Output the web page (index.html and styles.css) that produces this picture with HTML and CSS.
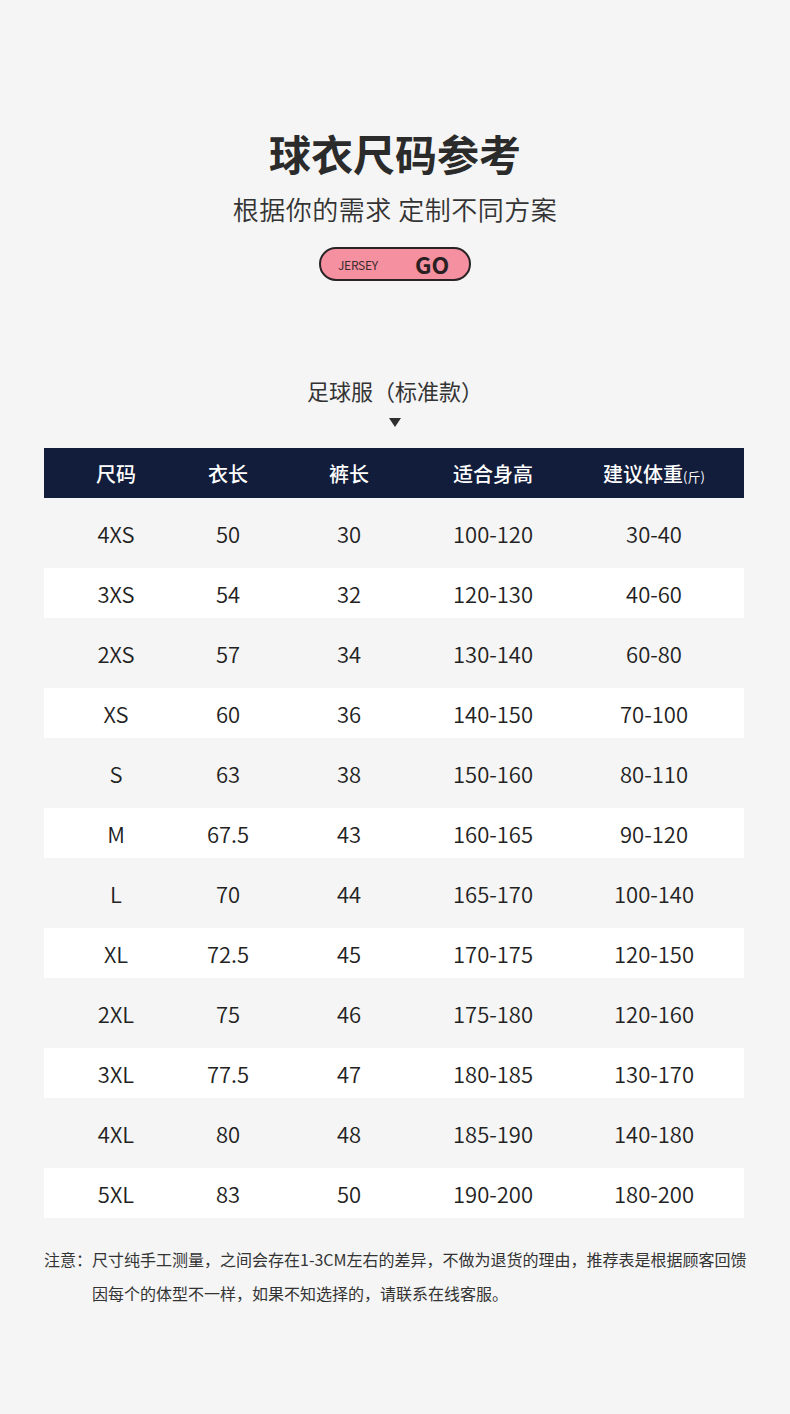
FILE: index.html
```html
<!DOCTYPE html>
<html lang="zh">
<head>
<meta charset="utf-8">
<title>球衣尺码参考</title>
<link rel="stylesheet" href="styles.css">
</head>
<body>
<div class="page">
  <header class="hero">
    <h1 class="title">球衣尺码参考</h1>
    <p class="subtitle">根据你的需求 定制不同方案</p>
    <div class="badge"><span class="badge-small">JERSEY</span><span class="badge-big">GO</span></div>
  </header>

  <section class="chart">
    <h2 class="chart-title">足球服（标准款）</h2>
    <div class="arrow"></div>
    <div class="table">
      <div class="row head">
        <div class="c c1">尺码</div><div class="c">衣长</div><div class="c">裤长</div><div class="c">适合身高</div><div class="c">建议体重<small>(斤)</small></div>
      </div>
      <div class="row"><div class="c c1">4XS</div><div class="c">50</div><div class="c">30</div><div class="c">100-120</div><div class="c">30-40</div></div>
      <div class="row alt"><div class="c c1">3XS</div><div class="c">54</div><div class="c">32</div><div class="c">120-130</div><div class="c">40-60</div></div>
      <div class="row"><div class="c c1">2XS</div><div class="c">57</div><div class="c">34</div><div class="c">130-140</div><div class="c">60-80</div></div>
      <div class="row alt"><div class="c c1">XS</div><div class="c">60</div><div class="c">36</div><div class="c">140-150</div><div class="c">70-100</div></div>
      <div class="row"><div class="c c1">S</div><div class="c">63</div><div class="c">38</div><div class="c">150-160</div><div class="c">80-110</div></div>
      <div class="row alt"><div class="c c1">M</div><div class="c">67.5</div><div class="c">43</div><div class="c">160-165</div><div class="c">90-120</div></div>
      <div class="row"><div class="c c1">L</div><div class="c">70</div><div class="c">44</div><div class="c">165-170</div><div class="c">100-140</div></div>
      <div class="row alt"><div class="c c1">XL</div><div class="c">72.5</div><div class="c">45</div><div class="c">170-175</div><div class="c">120-150</div></div>
      <div class="row"><div class="c c1">2XL</div><div class="c">75</div><div class="c">46</div><div class="c">175-180</div><div class="c">120-160</div></div>
      <div class="row alt"><div class="c c1">3XL</div><div class="c">77.5</div><div class="c">47</div><div class="c">180-185</div><div class="c">130-170</div></div>
      <div class="row"><div class="c c1">4XL</div><div class="c">80</div><div class="c">48</div><div class="c">185-190</div><div class="c">140-180</div></div>
      <div class="row alt"><div class="c c1">5XL</div><div class="c">83</div><div class="c">50</div><div class="c">190-200</div><div class="c">180-200</div></div>
    </div>
    <p class="note">注意：尺寸纯手工测量，之间会存在1-3CM左右的差异，不做为退货的理由，推荐表是根据顾客回馈<br>因每个的体型不一样，如果不知选择的，请联系在线客服。</p>
  </section>
</div>
</body>
</html>
```

FILE: styles.css
```css
html, body {
  margin: 0;
  padding: 0;
  background: #f5f5f5;
}
body {
  font-family: "Noto Sans CJK SC", "Noto Sans", sans-serif;
  color: #333;
}
.page {
  width: 790px;
  height: 1414px;
  box-sizing: border-box;
  padding-top: 124px;
}
.hero {
  display: flex;
  flex-direction: column;
  align-items: center;
}
.title {
  margin: 0;
  font-size: 42px;
  line-height: 58px;
  font-weight: 700;
  color: #2b2b2b;
}
.subtitle {
  margin: 9px 0 0;
  font-size: 26px;
  line-height: 36px;
  font-weight: 350;
  color: #333;
  letter-spacing: 0.5px;
}
.badge {
  margin-top: 20px;
  width: 152px;
  height: 34px;
  box-sizing: border-box;
  border: 2px solid #2a2326;
  border-radius: 17px;
  background: #f4909f;
  display: flex;
  align-items: center;
  padding-left: 17px;
}
.badge-small {
  font-size: 12px;
  color: #3a2a2e;
  letter-spacing: -0.3px;
  width: 77px;
}
.badge-big {
  font-size: 23px;
  font-weight: 700;
  color: #2a1f22;
  line-height: 30px;
}
.chart {
  margin-top: 94px;
  display: flex;
  flex-direction: column;
  align-items: center;
}
.chart-title {
  margin: 0;
  font-size: 22px;
  line-height: 30px;
  font-weight: 400;
  color: #333;
}
.arrow {
  margin-top: 13px;
  width: 0;
  height: 0;
  border-left: 6px solid transparent;
  border-right: 6px solid transparent;
  border-top: 9px solid #2e2e2e;
}
.table {
  margin-top: 21px;
  align-self: flex-start;
  margin-left: 44px;
  width: 700px;
  display: flex;
  flex-direction: column;
  gap: 10px;
}
.row {
  display: grid;
  grid-template-columns: 136px 96px 146px 142px 180px;
  height: 50px;
  align-items: center;
  font-size: 22px;
  color: #222;
  font-weight: 350;
}
.row.alt {
  background: #ffffff;
}
.row.head {
  background: #111d3b;
  color: #fff;
  font-size: 20px;
  font-weight: 500;
}
.row.head small {
  font-size: 13px;
  font-weight: 400;
}
.c {
  text-align: center;
}
.c1 {
  padding-left: 8px;
}
.note {
  align-self: stretch;
  margin: 24px 44px 0;
  font-size: 16px;
  line-height: 34px;
  color: #333;
  padding-left: 3em;
  text-indent: -3em;
  white-space: nowrap;
}
```
